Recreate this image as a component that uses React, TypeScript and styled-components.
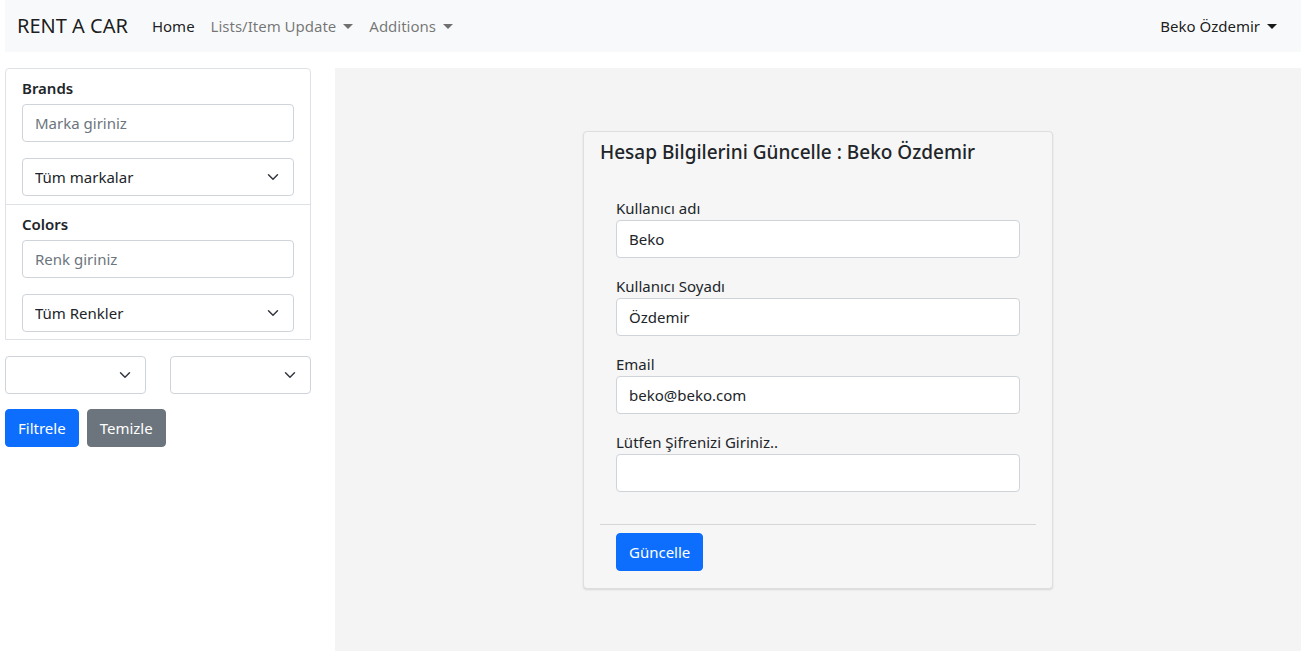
import React from "react";
import styled, { createGlobalStyle } from "styled-components";

const FONT = `"Noto Sans", "Open Sans", "Liberation Sans", sans-serif`;

const Global = createGlobalStyle`
  * { box-sizing: border-box; }
  body {
    margin: 0;
    font-family: ${FONT};
    font-size: 15px;
    line-height: 24px;
    color: #212529;
    background: #fff;
  }
  input, select, button { font-family: inherit; }
`;

const Page = styled.div`
  padding: 0 8px 13px 5px;
`;

const Navbar = styled.nav`
  height: 52px;
  background: #f8f9fa;
  display: flex;
  align-items: center;
  padding: 0 12px;
`;

const Brand = styled.span`
  font-size: 20px;
  color: rgba(0, 0, 0, 0.9);
  margin-right: 16px;
`;

const NavList = styled.div`
  display: flex;
  align-items: center;
  flex: 1;
`;

const NavLink = styled.span<{ $active?: boolean }>`
  padding: 8px;
  color: ${(p) => (p.$active ? "rgba(0,0,0,0.9)" : "rgba(0,0,0,0.55)")};
  display: inline-flex;
  align-items: center;
`;

const Caret = styled.span`
  display: inline-block;
  margin-left: 7px;
  border-top: 5px solid currentColor;
  border-left: 5px solid transparent;
  border-right: 5px solid transparent;
`;

const UserLink = styled(NavLink)`
  color: rgba(0, 0, 0, 0.9);
  margin-right: 4px;
`;

const Layout = styled.div`
  display: grid;
  grid-template-columns: 306px 1fr;
  column-gap: 24px;
  margin-top: 16px;
`;

const Sidebar = styled.aside`
  display: flex;
  flex-direction: column;
`;

const FilterGroup = styled.div`
  border: 1px solid #dee2e6;
  border-radius: 4px 4px 0 0;
`;

const FilterItem = styled.div<{ $last?: boolean }>`
  padding: 7px 16px ${(p) => (p.$last ? 7 : 8)}px 16px;
  border-bottom: ${(p) => (p.$last ? "none" : "1px solid #dee2e6")};
  display: flex;
  flex-direction: column;
`;

const FilterTitle = styled.div`
  font-weight: 600;
  line-height: 24px;
  margin-bottom: 4px;
`;

const TextInput = styled.input`
  display: block;
  width: 100%;
  height: 38px;
  padding: 6px 12px;
  font-size: 15px;
  color: #212529;
  background: #fff;
  border: 1px solid #ced4da;
  border-radius: 4px;
  outline: none;
  &::placeholder { color: #6c757d; }
`;

const Select = styled.select<{ $gap?: number }>`
  display: block;
  width: 100%;
  height: 38px;
  padding: 6px 36px 6px 12px;
  font-size: 15px;
  color: #212529;
  border: 1px solid #ced4da;
  border-radius: 4px;
  appearance: none;
  outline: none;
  margin-top: ${(p) => p.$gap ?? 0}px;
  background: #fff url("data:image/svg+xml,%3csvg xmlns='http://www.w3.org/2000/svg' viewBox='0 0 16 16'%3e%3cpath fill='none' stroke='%23343a40' stroke-linecap='round' stroke-linejoin='round' stroke-width='2' d='m2 5 6 6 6-6'/%3e%3c/svg%3e") no-repeat right 12px center / 16px 12px;
`;

const SelectRow = styled.div`
  display: grid;
  grid-template-columns: 1fr 1fr;
  column-gap: 24px;
  margin-top: 16px;
`;

const ButtonRow = styled.div`
  display: flex;
  gap: 8px;
  margin-top: 15px;
`;

const Button = styled.button<{ $variant?: "primary" | "secondary" }>`
  height: 38px;
  padding: 6px 12px;
  font-size: 15px;
  line-height: 24px;
  color: #fff;
  border: 1px solid ${(p) => (p.$variant === "secondary" ? "#6c757d" : "#0d6efd")};
  background: ${(p) => (p.$variant === "secondary" ? "#6c757d" : "#0d6efd")};
  border-radius: 4px;
`;

const Main = styled.main`
  background: #f4f4f4;
  height: 583px;
  display: flex;
  justify-content: center;
  align-items: flex-start;
  padding-top: 63px;
`;

const Card = styled.div`
  width: 470px;
  background: #f6f6f6;
  border: 1px solid #dedede;
  border-radius: 4px;
  box-shadow: 0 1px 2px rgba(0, 0, 0, 0.12);
  padding: 8px 16px 17px;
`;

const CardTitle = styled.h5`
  margin: 0;
  font-size: 19px;
  font-weight: 500;
  line-height: 24px;
  color: #212529;
`;

const Form = styled.div`
  padding: 32px 16px 0;
  display: flex;
  flex-direction: column;
  gap: 16px;
`;

const Field = styled.div`
  display: flex;
  flex-direction: column;
`;

const Label = styled.label`
  line-height: 24px;
`;

const Divider = styled.hr`
  margin: 32px 0 8px;
  border: 0;
  border-top: 1px solid #d6d6d6;
`;

const Footer = styled.div`
  padding: 0 16px;
`;

export default function App() {
  return (
    <>
      <Global />
      <Page>
        <Navbar>
          <Brand>RENT A CAR</Brand>
          <NavList>
            <NavLink $active>Home</NavLink>
            <NavLink>
              Lists/Item Update<Caret />
            </NavLink>
            <NavLink>
              Additions<Caret />
            </NavLink>
          </NavList>
          <UserLink>
            Beko Özdemir<Caret />
          </UserLink>
        </Navbar>
        <Layout>
          <Sidebar>
            <FilterGroup>
              <FilterItem>
                <FilterTitle>Brands</FilterTitle>
                <TextInput placeholder="Marka giriniz" />
                <Select $gap={16} defaultValue="all">
                  <option value="all">Tüm markalar</option>
                </Select>
              </FilterItem>
              <FilterItem $last>
                <FilterTitle>Colors</FilterTitle>
                <TextInput placeholder="Renk giriniz" />
                <Select $gap={16} defaultValue="all">
                  <option value="all">Tüm Renkler</option>
                </Select>
              </FilterItem>
            </FilterGroup>
            <SelectRow>
              <Select defaultValue="">
                <option value=""></option>
              </Select>
              <Select defaultValue="">
                <option value=""></option>
              </Select>
            </SelectRow>
            <ButtonRow>
              <Button>Filtrele</Button>
              <Button $variant="secondary">Temizle</Button>
            </ButtonRow>
          </Sidebar>
          <Main>
            <Card>
              <CardTitle>Hesap Bilgilerini Güncelle : Beko Özdemir</CardTitle>
              <Form>
                <Field>
                  <Label>Kullanıcı adı</Label>
                  <TextInput defaultValue="Beko" />
                </Field>
                <Field>
                  <Label>Kullanıcı Soyadı</Label>
                  <TextInput defaultValue="Özdemir" />
                </Field>
                <Field>
                  <Label>Email</Label>
                  <TextInput defaultValue="beko@beko.com" />
                </Field>
                <Field>
                  <Label>Lütfen Şifrenizi Giriniz..</Label>
                  <TextInput type="password" />
                </Field>
              </Form>
              <Divider />
              <Footer>
                <Button>Güncelle</Button>
              </Footer>
            </Card>
          </Main>
        </Layout>
      </Page>
    </>
  );
}
